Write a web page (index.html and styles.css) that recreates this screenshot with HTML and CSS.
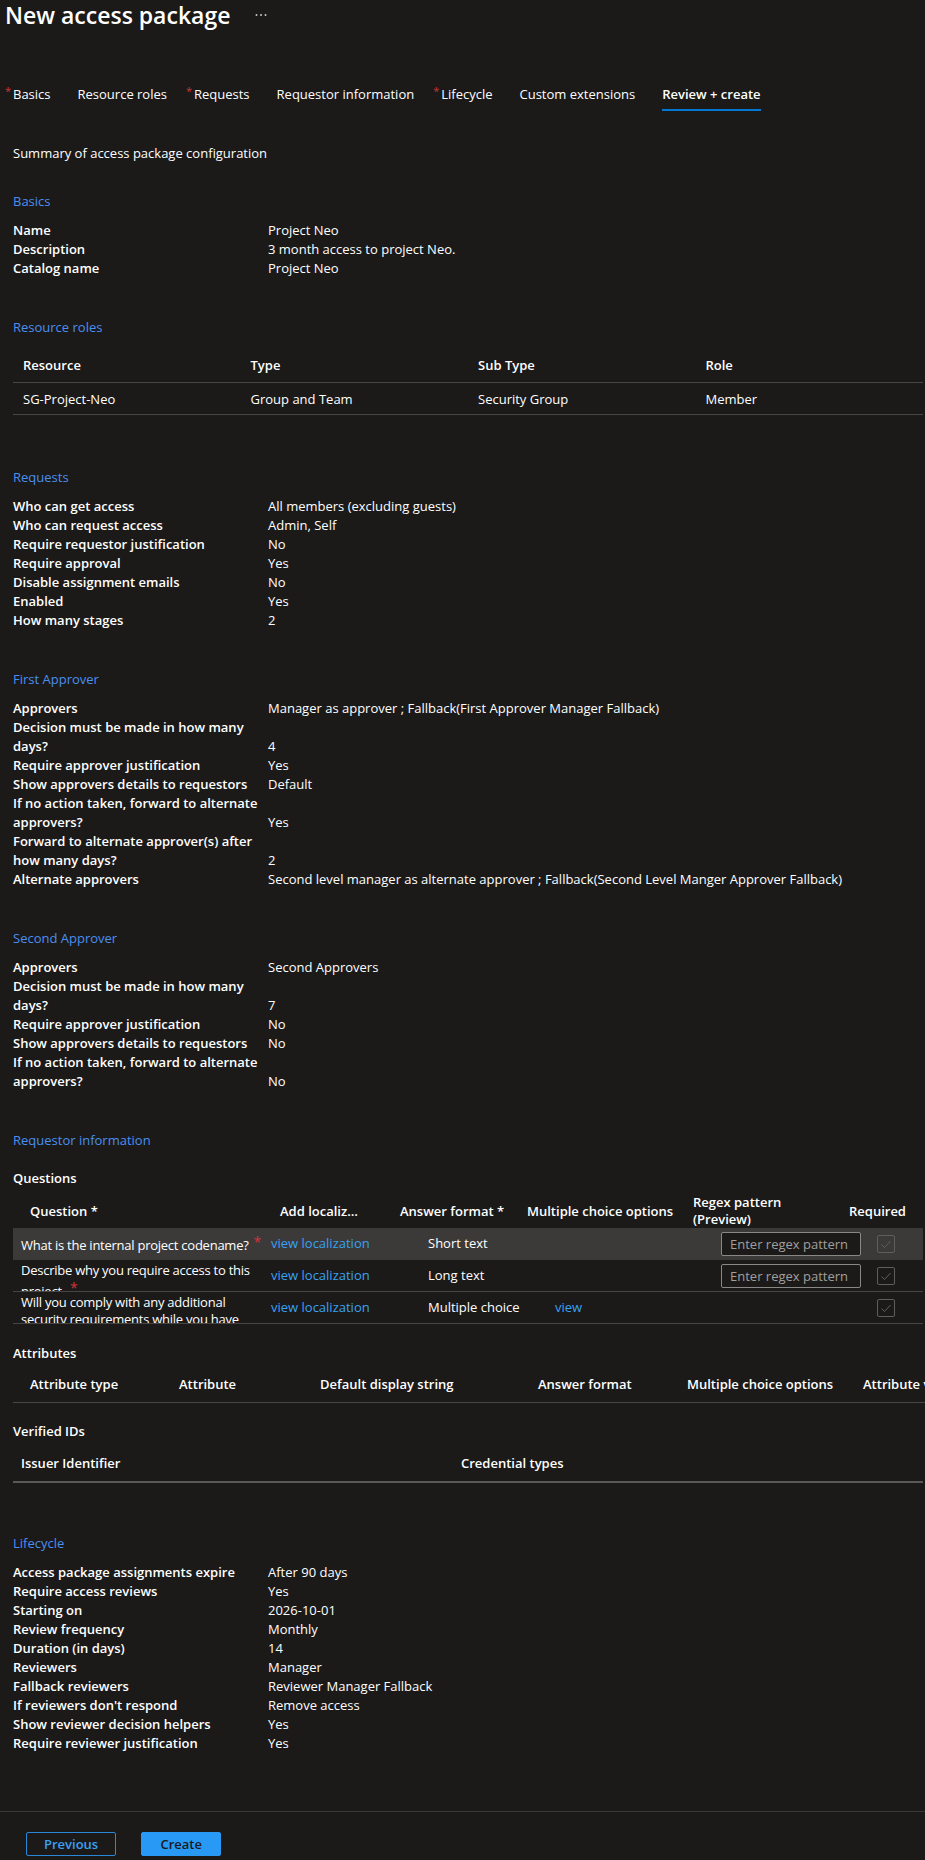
FILE: index.html
```html
<!DOCTYPE html>
<html lang="en">
<head>
    <meta charset="UTF-8">
    <meta name="viewport" content="width=device-width, initial-scale=1.0">
    <title>New access package</title>
    <link rel="stylesheet" href="styles.css">
</head>
<body>
    <header class="blade-header">
        <h1>New access package</h1>
        <svg class="more" width="12" height="4" viewBox="0 0 12 4"><circle cx="1.5" cy="2" r="1"/><circle cx="6" cy="2" r="1"/><circle cx="10.5" cy="2" r="1"/></svg>
    </header>

    <nav class="tabs">
        <a class="tab required">Basics</a>
        <a class="tab">Resource roles</a>
        <a class="tab required">Requests</a>
        <a class="tab">Requestor information</a>
        <a class="tab required">Lifecycle</a>
        <a class="tab">Custom extensions</a>
        <a class="tab active">Review + create</a>
    </nav>

    <main class="review">
        <p class="intro">Summary of access package configuration</p>

        <section class="group">
            <h2>Basics</h2>
            <dl class="props">
                <dt>Name</dt><dd>Project Neo</dd>
                <dt>Description</dt><dd>3 month access to project Neo.</dd>
                <dt>Catalog name</dt><dd>Project Neo</dd>
            </dl>
        </section>

        <section class="group group-loose">
            <h2>Resource roles</h2>
            <div class="res-table">
                <div class="cell head">Resource</div>
                <div class="cell head">Type</div>
                <div class="cell head">Sub Type</div>
                <div class="cell head">Role</div>
                <div class="cell">SG-Project-Neo</div>
                <div class="cell">Group and Team</div>
                <div class="cell">Security Group</div>
                <div class="cell">Member</div>
            </div>
        </section>

        <section class="group">
            <h2>Requests</h2>
            <dl class="props">
                <dt>Who can get access</dt><dd>All members (excluding guests)</dd>
                <dt>Who can request access</dt><dd>Admin, Self</dd>
                <dt>Require requestor justification</dt><dd>No</dd>
                <dt>Require approval</dt><dd>Yes</dd>
                <dt>Disable assignment emails</dt><dd>No</dd>
                <dt>Enabled</dt><dd>Yes</dd>
                <dt>How many stages</dt><dd>2</dd>
            </dl>
        </section>

        <section class="group">
            <h2>First Approver</h2>
            <dl class="props">
                <dt>Approvers</dt><dd>Manager as approver ; Fallback(First Approver Manager Fallback)</dd>
                <dt>Decision must be made in how many<br>days?</dt><dd>4</dd>
                <dt>Require approver justification</dt><dd>Yes</dd>
                <dt>Show approvers details to requestors</dt><dd>Default</dd>
                <dt>If no action taken, forward to alternate<br>approvers?</dt><dd>Yes</dd>
                <dt>Forward to alternate approver(s) after<br>how many days?</dt><dd>2</dd>
                <dt>Alternate approvers</dt><dd>Second level manager as alternate approver ; Fallback(Second Level Manger Approver Fallback)</dd>
            </dl>
        </section>

        <section class="group">
            <h2>Second Approver</h2>
            <dl class="props">
                <dt>Approvers</dt><dd>Second Approvers</dd>
                <dt>Decision must be made in how many<br>days?</dt><dd>7</dd>
                <dt>Require approver justification</dt><dd>No</dd>
                <dt>Show approvers details to requestors</dt><dd>No</dd>
                <dt>If no action taken, forward to alternate<br>approvers?</dt><dd>No</dd>
            </dl>
        </section>

        <section class="group group-requestor">
            <h2>Requestor information</h2>

            <h3 class="sub">Questions</h3>
            <div class="q-head">
                <div class="th wide">Question *</div>
                <div class="th wide clip">Add localization</div>
                <div class="th">Answer format *</div>
                <div class="th">Multiple choice options</div>
                <div class="th narrow">Regex pattern (Preview)</div>
                <div class="th">Required</div>
            </div>
            <div class="q-row selected">
                <div class="td q-text one">What is the internal project codename?<span class="req">*</span></div>
                <div class="td"><a class="link">view localization</a></div>
                <div class="td pad">Short text</div>
                <div class="td pad"></div>
                <div class="td pad"><input class="regex" placeholder="Enter regex pattern"></div>
                <div class="td pad"><span class="check"><svg width="16" height="16" viewBox="0 0 16 16"><path d="M3.5 8.5l3 3 6-6.5"/></svg></span></div>
            </div>
            <div class="q-row">
                <div class="td q-text wrap">Describe why you require access to this project.<span class="req">*</span></div>
                <div class="td"><a class="link">view localization</a></div>
                <div class="td pad">Long text</div>
                <div class="td pad"></div>
                <div class="td pad"><input class="regex" placeholder="Enter regex pattern"></div>
                <div class="td pad"><span class="check"><svg width="16" height="16" viewBox="0 0 16 16"><path d="M3.5 8.5l3 3 6-6.5"/></svg></span></div>
            </div>
            <div class="q-row">
                <div class="td q-text wrap">Will you comply with any additional security requirements while you have access?</div>
                <div class="td"><a class="link">view localization</a></div>
                <div class="td pad">Multiple choice</div>
                <div class="td pad"><a class="link">view</a></div>
                <div class="td pad"></div>
                <div class="td pad"><span class="check"><svg width="16" height="16" viewBox="0 0 16 16"><path d="M3.5 8.5l3 3 6-6.5"/></svg></span></div>
            </div>

            <h3 class="sub sub-attr">Attributes</h3>
            <div class="attr-head">
                <div>Attribute type</div>
                <div>Attribute</div>
                <div>Default display string</div>
                <div>Answer format</div>
                <div>Multiple choice options</div>
                <div>Attribute value (Preview)</div>
            </div>

            <h3 class="sub">Verified IDs</h3>
            <div class="vid-head">
                <div>Issuer Identifier</div>
                <div>Credential types</div>
            </div>
        </section>

        <section class="group">
            <h2>Lifecycle</h2>
            <dl class="props">
                <dt>Access package assignments expire</dt><dd>After 90 days</dd>
                <dt>Require access reviews</dt><dd>Yes</dd>
                <dt>Starting on</dt><dd>2026-10-01</dd>
                <dt>Review frequency</dt><dd>Monthly</dd>
                <dt>Duration (in days)</dt><dd>14</dd>
                <dt>Reviewers</dt><dd>Manager</dd>
                <dt>Fallback reviewers</dt><dd>Reviewer Manager Fallback</dd>
                <dt>If reviewers don't respond</dt><dd>Remove access</dd>
                <dt>Show reviewer decision helpers</dt><dd>Yes</dd>
                <dt>Require reviewer justification</dt><dd>Yes</dd>
            </dl>
        </section>
    </main>

    <footer class="actions">
        <button class="btn btn-outline">Previous</button>
        <button class="btn btn-primary">Create</button>
    </footer>
</body>
</html>
```

FILE: styles.css
```css
body {
    margin: 0;
    background: #1b1a19;
    color: #ffffff;
    font-family: "Segoe UI", "Open Sans", sans-serif;
    font-size: 13px;
    line-height: 19px;
    overflow: hidden;
}

.blade-header {
    display: flex;
    align-items: center;
    height: 30px;
    padding-left: 5px;
}
.blade-header h1 {
    margin: 0;
    font-size: 23px;
    font-weight: 600;
    line-height: 30px;
}
.more {
    margin-left: 25px;
    fill: #c8c6c4;
}

.tabs {
    display: flex;
    gap: 27px;
    margin-top: 47px;
    padding-left: 13px;
}
.tab {
    padding: 8px 0 5px;
    border-bottom: 2px solid transparent;
    color: #ffffff;
    white-space: nowrap;
}
.tab.required::before {
    content: "*";
    display: inline-block;
    width: 8px;
    margin-left: -8px;
    color: #d13438;
    font-size: 11px;
    line-height: 12px;
    vertical-align: top;
}
.tab.active {
    font-weight: 600;
    border-bottom-color: #0078d4;
}

.review {
    padding: 0 2px 0 13px;
}
.intro {
    margin: 33px 0 0;
}

.group {
    margin-top: 40px;
}
.intro + .group {
    margin-top: 29px;
}
.group-loose {
    padding-bottom: 13px;
}
.group-requestor {
    padding-bottom: 11px;
}
.group h2 {
    margin: 0 0 10px;
    font-size: 13px;
    font-weight: 400;
    line-height: 19px;
    color: #4a8ff0;
}

.props {
    display: grid;
    grid-template-columns: 255px 1fr;
    align-items: end;
    margin: 0;
}
.props dt {
    font-weight: 600;
    white-space: nowrap;
}
.props dd {
    margin: 0;
}

/* resource roles */
.res-table {
    display: grid;
    grid-template-columns: repeat(4, 1fr);
}
.res-table .cell {
    padding: 7px 0 5px 10px;
    border-bottom: 1px solid #484644;
}
.res-table .head {
    padding: 9px 0 7px 10px;
    font-weight: 600;
}

/* requestor information */
.sub {
    margin: 19px 0 0;
    font-size: 13px;
    font-weight: 600;
    line-height: 19px;
}
.sub-attr {
    margin-top: 20px;
}

.q-head,
.q-row {
    display: grid;
    grid-template-columns: 250px 129px 127px 166px 156px 1fr;
}
.q-head {
    height: 34px;
    margin-top: 6px;
    align-items: center;
    font-weight: 600;
    line-height: 17px;
}
.q-head .th {
    padding-left: 8px;
    white-space: nowrap;
}
.q-head .th.wide {
    padding-left: 17px;
}
.q-head .th.clip {
    padding-right: 30px;
    overflow: hidden;
    text-overflow: ellipsis;
}
.q-head .th.narrow {
    padding-right: 30px;
    white-space: normal;
}

.q-row {
    grid-template-rows: 31px;
    align-items: center;
    border-bottom: 1px solid #484644;
    overflow: hidden;
}
.q-row.selected {
    background: #3b3a39;
    border-bottom-color: #3b3a39;
}
.q-row .td {
    padding-left: 8px;
    white-space: nowrap;
}
.q-row .td.pad {
    padding-left: 36px;
}
.q-row .q-text {
    white-space: normal;
    line-height: 17px;
    letter-spacing: -0.25px;
}
.q-row .q-text.one {
    white-space: nowrap;
}
.q-row .q-text.wrap {
    align-self: start;
    padding-top: 2px;
}
.req {
    margin-left: 5px;
    color: #d13438;
    font-size: 14px;
    vertical-align: 3px;
}
.link {
    color: #3aa0f3;
}

.regex {
    box-sizing: border-box;
    display: block;
    width: 140px;
    height: 24px;
    padding: 0 8px;
    background: #1b1a19;
    border: 1px solid #8a8886;
    border-radius: 2px;
    color: #ffffff;
    font: inherit;
}
.regex::placeholder {
    color: #a19f9d;
}

.check {
    box-sizing: border-box;
    display: flex;
    align-items: center;
    justify-content: center;
    width: 18px;
    height: 18px;
    border: 1px solid #605e5c;
    border-radius: 2px;
}
.check path {
    fill: none;
    stroke: #605e5c;
    stroke-width: 1;
}

.attr-head,
.vid-head {
    display: grid;
    font-weight: 600;
    line-height: 17px;
    white-space: nowrap;
    overflow: hidden;
}
.attr-head {
    grid-template-columns: 149px 141px 218px 149px 176px 1fr;
    margin-right: -2px;
    padding: 13px 0 9px;
    border-bottom: 1px solid #484644;
}
.attr-head div {
    padding-left: 17px;
}
.vid-head {
    grid-template-columns: 440px 1fr;
    padding: 14px 0 9px;
    border-bottom: 2px solid #5a5856;
}
.vid-head div {
    padding-left: 8px;
}

/* bottom action bar */
.actions {
    display: flex;
    gap: 25px;
    margin-top: 58px;
    padding: 20px 0 0 26px;
    border-top: 1px solid #3b3a39;
}
.btn {
    height: 24px;
    min-width: 80px;
    padding: 0 17px;
    border-radius: 2px;
    font: inherit;
    font-weight: 600;
    line-height: 22px;
}
.btn-outline {
    background: transparent;
    border: 1px solid #2b88d8;
    color: #3aa0f3;
}
.btn-primary {
    background: #2899f5;
    border: 1px solid #2899f5;
    color: #1b1a19;
}
```
